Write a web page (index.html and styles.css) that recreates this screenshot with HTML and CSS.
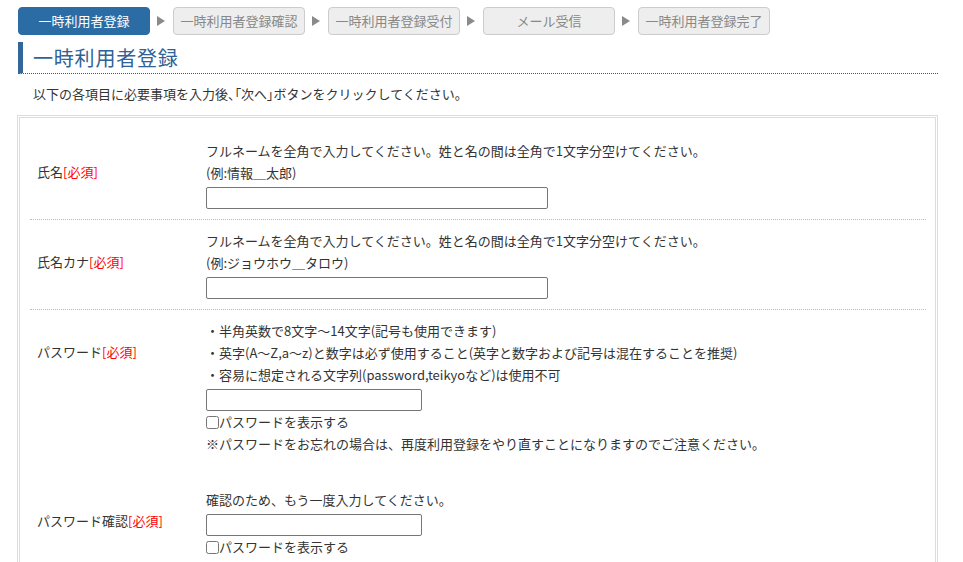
FILE: index.html
```html
<!DOCTYPE html>
<html lang="ja">
<head>
<meta charset="utf-8">
<title>一時利用者登録</title>
<link rel="stylesheet" href="styles.css">
</head>
<body>
<div class="page">
  <ol class="steps">
    <li class="step active">一時利用者登録</li>
    <li class="arrow"></li>
    <li class="step">一時利用者登録確認</li>
    <li class="arrow"></li>
    <li class="step">一時利用者登録受付</li>
    <li class="arrow"></li>
    <li class="step">メール受信</li>
    <li class="arrow"></li>
    <li class="step">一時利用者登録完了</li>
  </ol>

  <h1 class="title">一時利用者登録</h1>
  <p class="intro">以下の各項目に必要事項を入力後<span class="tight">、「</span>次へ<span class="tight">」</span>ボタンをクリックしてください。</p>

  <div class="form-box">
    <div class="row">
      <div class="label">氏名<span class="req">[必須]</span></div>
      <div class="field">
        <p class="line">フルネームを全角で入力してください。姓と名の間は全角で1文字分空けてください。</p>
        <p class="line">(例:情報＿太郎)</p>
        <input class="text wide" type="text">
      </div>
    </div>
    <div class="row">
      <div class="label">氏名カナ<span class="req">[必須]</span></div>
      <div class="field">
        <p class="line">フルネームを全角で入力してください。姓と名の間は全角で1文字分空けてください。</p>
        <p class="line">(例:ジョウホウ＿タロウ)</p>
        <input class="text wide" type="text">
      </div>
    </div>
    <div class="row open">
      <div class="label">パスワード<span class="req">[必須]</span></div>
      <div class="field">
        <p class="line">・半角英数で8文字～14文字(記号も使用できます)</p>
        <p class="line">・英字(A～Z,a～z)と数字は必ず使用すること(英字と数字および記号は混在することを推奨)</p>
        <p class="line">・容易に想定される文字列(password,teikyoなど)は使用不可</p>
        <input class="text short" type="password">
        <label class="check"><input type="checkbox">パスワードを表示する</label>
        <p class="line">※パスワードをお忘れの場合は、再度利用登録をやり直すことになりますのでご注意ください。</p>
      </div>
    </div>
    <div class="row plain">
      <div class="label">パスワード確認<span class="req">[必須]</span></div>
      <div class="field">
        <p class="line">確認のため、もう一度入力してください。</p>
        <input class="text short" type="password">
        <label class="check"><input type="checkbox">パスワードを表示する</label>
      </div>
    </div>
  </div>
</div>
</body>
</html>
```

FILE: styles.css
```css
* { box-sizing: border-box; }

body {
  margin: 0;
  background: #fff;
  color: #333;
  font-family: "Noto Sans CJK JP", "Noto Sans", sans-serif;
  font-size: 13px;
}

.page {
  padding: 7px 25px 0 18px;
}

.steps {
  list-style: none;
  margin: 0;
  padding: 0;
  display: flex;
  align-items: center;
}

.step {
  width: 132px;
  height: 28px;
  line-height: 26px;
  text-align: center;
  background: #eeeeee;
  border: 1px solid #cccccc;
  border-radius: 4px;
  color: #888;
  font-size: 13px;
}

.step.active {
  background: #2b6ca5;
  border-color: #2b6ca5;
  color: #fff;
}

.arrow {
  width: 0;
  height: 0;
  margin: 0 8px 0 7px;
  border-style: solid;
  border-width: 5px 0 5px 8px;
  border-color: transparent transparent transparent #8a8a8a;
}

.title {
  margin: 7px 0 0;
  height: 32px;
  padding-left: 10px;
  border-left: 5px solid #336699;
  border-bottom: 1px dotted #555;
  color: #2f6296;
  font-size: 20px;
  font-weight: normal;
  line-height: 31px;
  letter-spacing: 0.8px;
}

.intro {
  margin: 9px 0 0 15px;
  line-height: 22px;
}

.tight {
  font-feature-settings: "palt";
}

.form-box {
  margin-top: 10px;
  margin-left: -1px;
  border: 3px double #dddddd;
  padding: 12px 9px 0 10px;
}

.row {
  display: flex;
  padding: 10px 0;
  border-bottom: 1px dotted #bbbbbb;
}

.row.open {
  border-bottom: none;
}

.row.plain {
  border-bottom: none;
  padding-top: 24px;
}

.label {
  width: 176px;
  flex: none;
  padding: 21px 0 0 7px;
  line-height: 22px;
}

.req {
  color: #ff0000;
}

.field {
  flex: 1;
}

.line {
  margin: 0;
  line-height: 22px;
}

.text {
  display: block;
  margin: 3px 0 0;
  height: 22px;
  border: 1px solid #767676;
  border-radius: 2px;
  padding: 1px 4px;
  font: inherit;
}

.wide { width: 342px; }
.short { width: 216px; }

.check {
  display: flex;
  align-items: center;
  line-height: 22px;
}

.check input {
  margin: 0;
  width: 13px;
  height: 13px;
}
```
